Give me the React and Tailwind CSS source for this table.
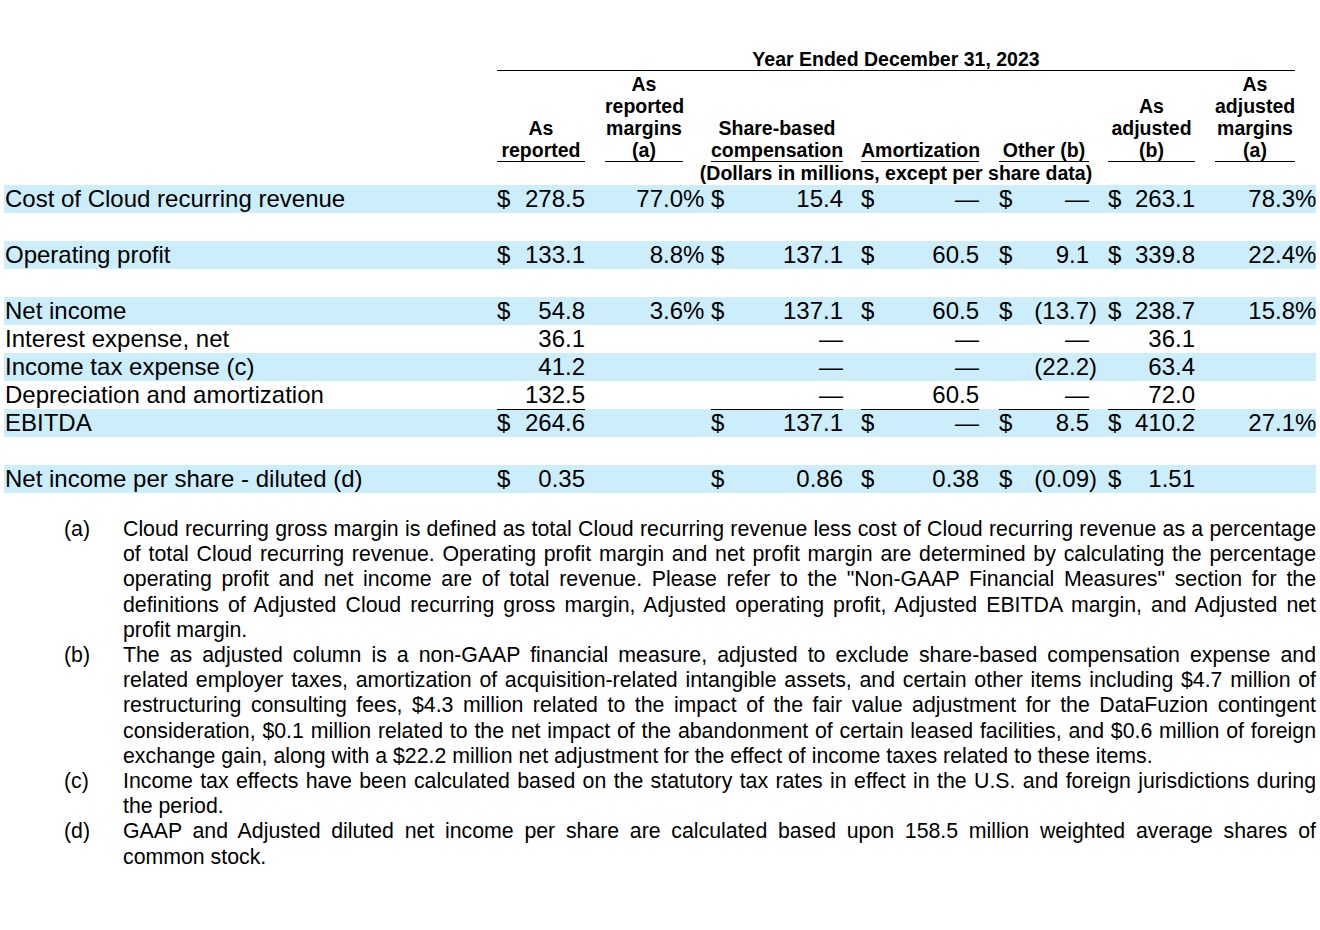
import React from "react";

const BLUE = "bg-[#ccedfa]";

const rows = [
  { label: "Cost of Cloud recurring revenue", bg: true, c1: ["$", "278.5"], m1: "77.0", c3: ["$", "15.4"], c4: ["$", "—"], c5: ["$", "—"], c6: ["$", "263.1"], m2: "78.3" },
  { blank: true },
  { label: "Operating profit", bg: true, c1: ["$", "133.1"], m1: "8.8", c3: ["$", "137.1"], c4: ["$", "60.5"], c5: ["$", "9.1"], c6: ["$", "339.8"], m2: "22.4" },
  { blank: true },
  { label: "Net income", bg: true, c1: ["$", "54.8"], m1: "3.6", c3: ["$", "137.1"], c4: ["$", "60.5"], c5: ["$", "(13.7)"], c6: ["$", "238.7"], m2: "15.8" },
  { label: "Interest expense, net", bg: false, c1: ["", "36.1"], m1: "", c3: ["", "—"], c4: ["", "—"], c5: ["", "—"], c6: ["", "36.1"], m2: "" },
  { label: "Income tax expense (c)", bg: true, c1: ["", "41.2"], m1: "", c3: ["", "—"], c4: ["", "—"], c5: ["", "(22.2)"], c6: ["", "63.4"], m2: "" },
  { label: "Depreciation and amortization", bg: false, c1: ["", "132.5"], m1: "", c3: ["", "—"], c4: ["", "60.5"], c5: ["", "—"], c6: ["", "72.0"], m2: "" },
  { label: "EBITDA", bg: true, top: true, c1: ["$", "264.6"], m1: "", c3: ["$", "137.1"], c4: ["$", "—"], c5: ["$", "8.5"], c6: ["$", "410.2"], m2: "27.1" },
  { blank: true },
  { label: "Net income per share - diluted (d)", bg: true, c1: ["$", "0.35"], m1: "", c3: ["$", "0.86"], c4: ["$", "0.38"], c5: ["$", "(0.09)"], c6: ["$", "1.51"], m2: "" },
];

function Money({ w, cell, top }) {
  const [d, v] = cell;
  const shown = v.endsWith(")") ? v.slice(0, -1) : v;
  return (
    <div className={`flex justify-between ${w} ${top ? "shadow-[inset_0_1px_0_#000]" : ""}`}>
      <span>{d}</span>
      <span>{shown}</span>
    </div>
  );
}

function Gap({ w, cell }) {
  const paren = cell && cell[1].endsWith(")");
  return <div className={w}>{paren ? ")" : ""}</div>;
}

function Row({ r }) {
  if (r.blank) return <div className="h-[28px]" />;
  return (
    <div className={`flex h-[28px] leading-[28px] ${r.bg ? BLUE : ""}`}>
      <div className="w-[493px] pl-[1px] whitespace-nowrap">{r.label}</div>
      <Money w="w-[88px]" cell={r.c1} top={r.top} />
      <Gap w="w-[20px]" cell={r.c1} />
      <div className="w-[78px] text-right">{r.m1}</div>
      <div className="w-[21px]">{r.m1 ? "%" : ""}</div>
      <div className="w-[7px]" />
      <Money w="w-[132px]" cell={r.c3} top={r.top} />
      <Gap w="w-[18px]" cell={r.c3} />
      <Money w="w-[118px]" cell={r.c4} top={r.top} />
      <Gap w="w-[20px]" cell={r.c4} />
      <Money w="w-[90px]" cell={r.c5} top={r.top} />
      <Gap w="w-[19px]" cell={r.c5} />
      <Money w="w-[87px]" cell={r.c6} top={r.top} />
      <Gap w="w-[20px]" cell={r.c6} />
      <div className="w-[80px] text-right">{r.m2}</div>
      <div className="w-[21px]">{r.m2 ? "%" : ""}</div>
    </div>
  );
}

const notes = [
  ["(a)", "Cloud recurring gross margin is defined as total Cloud recurring revenue less cost of Cloud recurring revenue as a percentage of total Cloud recurring revenue. Operating profit margin and net profit margin are determined by calculating the percentage operating profit and net income are of total revenue. Please refer to the \"Non-GAAP Financial Measures\" section for the definitions of Adjusted Cloud recurring gross margin, Adjusted operating profit, Adjusted EBITDA margin, and Adjusted net profit margin."],
  ["(b)", "The as adjusted column is a non-GAAP financial measure, adjusted to exclude share-based compensation expense and related employer taxes, amortization of acquisition-related intangible assets, and certain other items including $4.7 million of restructuring consulting fees, $4.3 million related to the impact of the fair value adjustment for the DataFuzion contingent consideration, $0.1 million related to the net impact of the abandonment of certain leased facilities, and $0.6 million of foreign exchange gain, along with a $22.2 million net adjustment for the effect of income taxes related to these items."],
  ["(c)", "Income tax effects have been calculated based on the statutory tax rates in effect in the U.S. and foreign jurisdictions during the period."],
  ["(d)", "GAAP and Adjusted diluted net income per share are calculated based upon 158.5 million weighted average shares of common stock."],
];

function HeadCol({ w, lines }) {
  return (
    <div className={`${w} text-center border-b border-black`}>
      {lines.map((l, i) => (
        <div key={i} className="whitespace-nowrap">{l}</div>
      ))}
    </div>
  );
}

export default function App() {
  return (
    <div className="w-[1320px] h-[930px] bg-white text-black font-['Liberation_Sans',Arial,sans-serif] pt-[48px]">
      <div className="pl-[4px] w-[1316px]">
        {/* header */}
        <div className="font-bold text-[19.5px] leading-[22px]">
          <div className="flex">
            <div className="w-[493px]" />
            <div className="w-[798px] text-center border-b border-black">Year Ended December 31, 2023</div>
          </div>
          <div className="flex items-end pt-[2px]">
            <div className="w-[493px]" />
            <HeadCol w="w-[88px]" lines={["As", "reported"]} />
            <div className="w-[20px]" />
            <HeadCol w="w-[78px]" lines={["As", "reported", "margins", "(a)"]} />
            <div className="w-[28px]" />
            <HeadCol w="w-[132px]" lines={["Share-based", "compensation"]} />
            <div className="w-[18px]" />
            <HeadCol w="w-[118px]" lines={["Amortization"]} />
            <div className="w-[20px]" />
            <HeadCol w="w-[90px]" lines={["Other (b)"]} />
            <div className="w-[19px]" />
            <HeadCol w="w-[87px]" lines={["As", "adjusted", "(b)"]} />
            <div className="w-[20px]" />
            <HeadCol w="w-[80px]" lines={["As", "adjusted", "margins", "(a)"]} />
          </div>
          <div className="flex">
            <div className="w-[493px]" />
            <div className="w-[798px] text-center">(Dollars in millions, except per share data)</div>
          </div>
        </div>

        {/* body */}
        <div className="text-[24px] mt-[1px]">
          {rows.map((r, i) => (
            <Row key={i} r={r} />
          ))}
        </div>
      </div>

      {/* footnotes */}
      <div className="mt-[24px] pl-[64px] text-[21.3px] leading-[25.2px]">
        {notes.map(([k, t]) => (
          <div key={k} className="flex">
            <div className="w-[59px] shrink-0">{k}</div>
            <div className="w-[1193px] text-justify">{t}</div>
          </div>
        ))}
      </div>
    </div>
  );
}
